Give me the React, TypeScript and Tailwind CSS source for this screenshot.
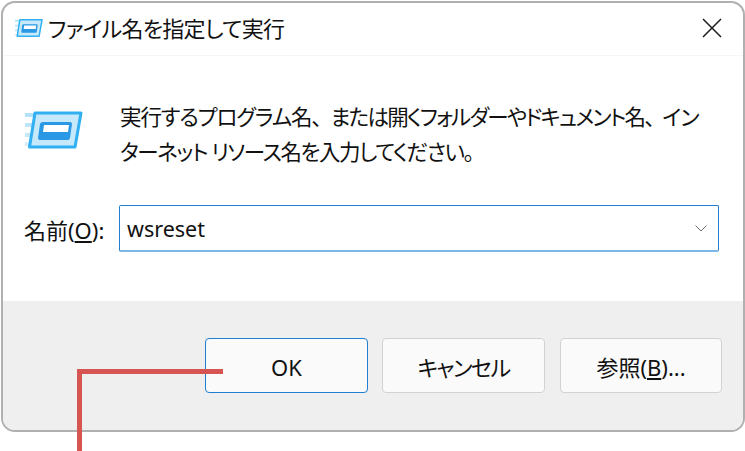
const RunIcon = ({ className }: { className: string }) => (
  <svg viewBox="0 0 58 40" className={className}>
    <g fill="#3fb4ee">
      <rect x="0" y="3" width="10" height="4" opacity="0.4" />
      <rect x="0" y="13" width="8" height="4" opacity="0.35" />
      <rect x="0" y="23" width="7" height="4" opacity="0.3" />
      <rect x="0" y="32" width="5" height="4" opacity="0.2" />
    </g>
    <path d="M10 3 H56 L50 37 H4.5 Z" fill="#c6e8fb" stroke="#30b0f2" strokeWidth="3" strokeLinejoin="round" />
    <path d="M18 12 H45 a2 2 0 0 1 2 2 L45 28 a2.5 2.5 0 0 1-2.5 2 H15 a2 2 0 0 1-2-2 L15 14 a3 3 0 0 1 3-2 Z" fill="#2a98e4" />
    <path d="M19 15 H44 L43 22 H18 Z" fill="#ffffff" />
  </svg>
);

const DialogButton = ({ children, className }: { children: React.ReactNode; className: string }) => (
  <button className={`h-[55px] pt-[3px] rounded-[4px] border bg-[#fafafa] text-[22px] text-[#111111] ${className}`}>
    {children}
  </button>
);

const App = () => {
  return (
    <div className="relative w-[745px] h-[451px] bg-white overflow-hidden font-['Noto_Sans','Noto_Sans_CJK_JP',sans-serif] [font-feature-settings:'palt']">
      <div className="w-[744px] h-[431px] ml-[1px] mt-[1px] flex flex-col rounded-[14px] border-2 border-[#b0b0b0] overflow-hidden bg-white">
        <div className="h-[53px] shrink-0 flex items-center justify-between pl-[12px] pr-[21px] border-b border-[#f6f6f6]">
          <div className="flex items-center gap-[5px] mt-[-2px]">
            <RunIcon className="w-[28px] h-[20px]" />
            <span className="text-[22px] tracking-[-0.7px] text-[#111111]">ファイル名を指定して実行</span>
          </div>
          <svg viewBox="0 0 20 20" className="w-[20px] h-[20px] mt-[-3px]">
            <path d="M1 1 L19 19 M19 1 L1 19" stroke="#222222" strokeWidth="1.6" fill="none" />
          </svg>
        </div>

        <div className="flex-1 flex flex-col">
          <div className="flex pl-[22px] pt-[44px]">
            <RunIcon className="w-[58px] h-[40px] mt-[10px] shrink-0" />
            <p className="w-[610px] ml-[37px] mt-[-1px] text-[21.5px] leading-[35px] text-[#111111] whitespace-nowrap">
              <span className="tracking-[-1px]">実行するプログラム名</span>
              <span className="inline-block w-[19px]">、</span>
              <span className="tracking-[-1.75px]">または開くフォルダーやドキュメント名</span>
              <span className="inline-block w-[18px]">、</span>
              <span className="tracking-[-0.9px]">イン</span>
              <br />
              <span className="tracking-[-1.4px]">ターネット リソース名を入力してください。</span>
            </p>
          </div>
          <div className="flex items-center mt-[36px] pl-[21px]">
            <span className="w-[95px] mt-[3px] text-[22px] text-[#111111]">
              名前(<span className="underline underline-offset-2">O</span>):
            </span>
            <div className="w-[600px] h-[47px] flex items-center justify-between pl-[7px] pr-[11px] rounded-[2px] border border-[#1f7fd0] border-b-2 border-b-[#7cb8e8]">
              <span className="mt-[2px] text-[21.5px] text-[#111111]">wsreset</span>
              <svg viewBox="0 0 12 7" className="w-[12px] h-[7px]">
                <path d="M0.5 0.5 L6 6 L11.5 0.5" stroke="#6e6e6e" strokeWidth="1" fill="none" />
              </svg>
            </div>
          </div>
        </div>

        <div className="h-[129px] shrink-0 bg-[#efefef] flex justify-end gap-[15px] pt-[37px] pr-[21px]">
          <DialogButton className="w-[163px] border-[#1f7fd0]">OK</DialogButton>
          <DialogButton className="w-[163px] ml-[-1px] border-[#d2d2d2]">
            <span className="tracking-[-1.5px]">キャンセル</span>
          </DialogButton>
          <DialogButton className="w-[162px] border-[#d2d2d2]">
            参照(<span className="underline underline-offset-2">B</span>)...
          </DialogButton>
        </div>
      </div>

      {/* callout line */}
      <div className="absolute left-[77px] top-[369px] w-[146px] h-[5px] bg-[#d65452]" />
      <div className="absolute left-[77px] top-[369px] w-[5px] h-[82px] bg-[#d65452]" />
    </div>
  );
};

export default App;
